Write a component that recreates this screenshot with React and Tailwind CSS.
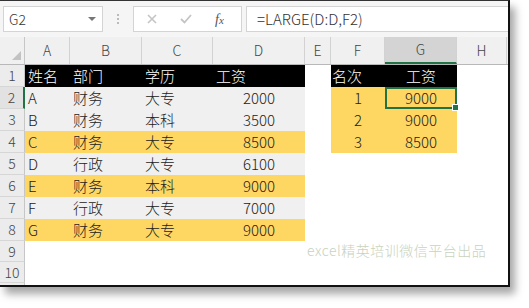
import React from "react";

const COLS = [
  { k: "A", w: 45 },
  { k: "B", w: 72 },
  { k: "C", w: 71 },
  { k: "D", w: 92 },
  { k: "E", w: 26 },
  { k: "F", w: 54 },
  { k: "G", w: 72 },
  { k: "H", w: 50 },
];

const YEL = "bg-[#fed762]";
const GRY = "bg-[#f0f0f0]";

const data = [
  ["A", "财务", "大专", "2000", GRY, "1", "9000"],
  ["B", "财务", "本科", "3500", GRY, "2", "9000"],
  ["C", "财务", "大专", "8500", YEL, "3", "8500"],
  ["D", "行政", "大专", "6100", GRY],
  ["E", "财务", "本科", "9000", YEL],
  ["F", "行政", "大专", "7000", GRY],
  ["G", "财务", "大专", "9000", YEL],
];

const font = { fontFamily: '"Noto Sans CJK SC", "Noto Sans", sans-serif' };

function RowHead({ n, sel }) {
  return (
    <div
      className={`w-[25px] shrink-0 flex items-center justify-center text-[14px] text-[#444] border-b border-[#d6d6d6] ${
        sel ? "bg-[#e2e2e2] border-r-2 border-r-[#217346]" : "bg-[#ececec] border-r border-r-[#c6c6c6]"
      }`}
    >
      {n}
    </div>
  );
}

export default function App() {
  return (
    <div className="w-[529px] h-[308px] bg-white relative overflow-hidden font-light" style={font}>
      <div className="w-[510px] h-[287px] border-t border-t-[#333] border-r-2 border-b-2 border-[#111] bg-white shadow-[5px_7px_8px_rgba(0,0,0,0.35)] flex flex-col overflow-hidden">
        {/* toolbar */}
        <div className="h-[36px] shrink-0 bg-[#f5f5f5] flex items-center">
          <div className="ml-[3px] w-[100px] h-[26px] bg-white border border-[#d4d4d4] flex items-center justify-between px-[5px]">
            <span className="text-[14px] text-[#333]">G2</span>
            <span className="w-0 h-0 border-l-[4px] border-r-[4px] border-t-[4px] border-l-transparent border-r-transparent border-t-[#777] mr-[1px]"></span>
          </div>
          <div className="ml-[14px] flex flex-col gap-[2px]">
            <span className="w-[2px] h-[2px] bg-[#bbb]"></span>
            <span className="w-[2px] h-[2px] bg-[#bbb]"></span>
            <span className="w-[2px] h-[2px] bg-[#bbb]"></span>
          </div>
          <div className="ml-[14px] w-[109px] h-[26px] bg-white border border-[#d4d4d4] flex items-center">
            <svg width="10" height="10" viewBox="0 0 10 10" className="ml-[13px]">
              <path d="M1 1 L9 9 M9 1 L1 9" stroke="#c4c4c4" strokeWidth="1.6" />
            </svg>
            <svg width="12" height="10" viewBox="0 0 12 10" className="ml-[23px]">
              <path d="M1 5 L4.5 8.5 L11 1" stroke="#c4c4c4" strokeWidth="1.8" fill="none" />
            </svg>
            <span
              className="ml-[23px] text-[14px] text-[#555] italic"
              style={{ fontFamily: '"Liberation Serif", serif' }}
            >
              f<span className="text-[11px]">x</span>
            </span>
          </div>
          <div className="ml-[4px] flex-1 h-[26px] bg-white border border-[#d4d4d4] border-r-0 flex items-center pl-[10px] text-[15px] text-[#333]">
            =LARGE(D:D,F2)
          </div>
        </div>

        {/* column headers */}
        <div className="h-[28px] shrink-0 flex border-b border-[#b8b8b8] bg-[#f0f0f0]">
          <div className="w-[25px] shrink-0 border-r border-[#c6c6c6] relative">
            <span className="absolute right-[3px] bottom-[4px] w-0 h-0" style={{ borderBottom: "9px solid #c2c2c2", borderLeft: "9px solid transparent" }}></span>
          </div>
          {COLS.map((c) => (
            <div
              key={c.k}
              style={{ width: c.w }}
              className={`shrink-0 flex items-center justify-center text-[14px] text-[#444] border-r border-[#d2d2d2] ${
                c.k === "G" ? "bg-[#d4d4d4] border-b-2 border-b-[#217346]" : ""
              }`}
            >
              {c.k}
            </div>
          ))}
        </div>

        {/* row 1 */}
        <div className="h-[22px] shrink-0 flex text-[15px]">
          <RowHead n="1" />
          <div className="w-[280px] shrink-0 bg-black text-white flex items-center">
            <span className="w-[45px] pl-[3px]">姓名</span>
            <span className="w-[72px] pl-[3px]">部门</span>
            <span className="w-[71px] pl-[3px]">学历</span>
            <span className="w-[92px] pl-[3px]">工资</span>
          </div>
          <div className="w-[26px] shrink-0"></div>
          <div className="w-[126px] shrink-0 bg-black text-white flex items-center">
            <span className="w-[54px] pl-[1px]">名次</span>
            <span className="w-[72px] text-center">工资</span>
          </div>
        </div>

        {data.map((r, i) => (
          <div key={i} className="h-[22px] shrink-0 flex text-[15px] text-[#222]">
            <RowHead n={i + 2} sel={i === 0} />
            <div className={`w-[280px] shrink-0 flex items-center ${r[4]}`}>
              <span className="w-[45px] pl-[3px]">{r[0]}</span>
              <span className="w-[72px] pl-[3px]">{r[1]}</span>
              <span className="w-[71px] pl-[3px]">{r[2]}</span>
              <span className="w-[92px] pr-[30px] text-right">{r[3]}</span>
            </div>
            <div className="w-[26px] shrink-0"></div>
            {r[5] && (
              <div className={`w-[126px] shrink-0 flex items-center ${YEL}`}>
                <span className="w-[54px] text-center">{r[5]}</span>
                <span
                  className={`w-[72px] h-full flex items-center justify-center relative ${
                    i === 0 ? "border-2 border-[#217346]" : ""
                  }`}
                >
                  {r[6]}
                  {i === 0 && (
                    <span className="absolute right-[-4px] bottom-[-4px] w-[5px] h-[5px] bg-[#217346] border border-white box-content"></span>
                  )}
                </span>
              </div>
            )}
          </div>
        ))}

        <div className="h-[21px] shrink-0 flex text-[15px]">
          <RowHead n="9" />
        </div>
        <div className="h-[21px] shrink-0 flex text-[15px] relative">
          <RowHead n="10" />
          <span className="absolute left-[307px] top-[-22px] text-[14px] text-[#c9d2bd] tracking-[0.5px]">
            excel精英培训微信平台出品
          </span>
        </div>
        <div className="flex-1 flex">
          <div className="w-[25px] bg-[#ececec] border-r border-[#c6c6c6]"></div>
        </div>
      </div>
    </div>
  );
}
